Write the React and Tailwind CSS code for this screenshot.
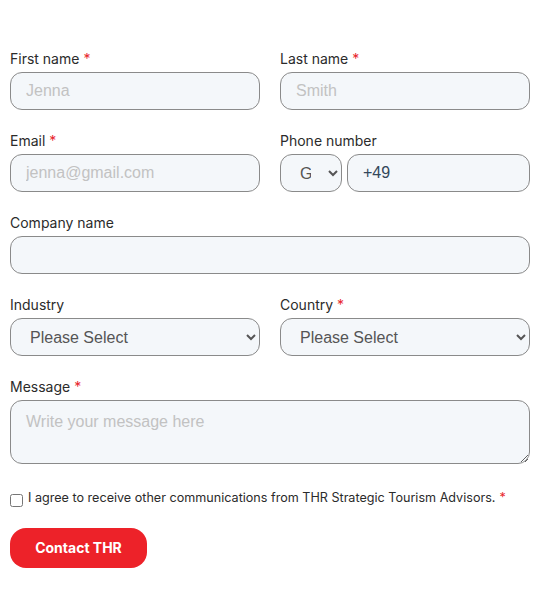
const baseCls =
  'block h-[38px] rounded-[12px] border border-[#8a8a8a] bg-[#f4f7fa] text-[16px] outline-none'
const inputCls =
  baseCls + ' w-full min-w-0 px-[15px] text-[#33475b] placeholder:text-[#c2c2c2]'
const selectCls = baseCls + ' w-full pl-[15px] pr-[4px] text-[#555]'
const codeCls = baseCls + ' w-[62px] shrink-0 pl-[15px] pr-[14px] text-[#555]'

function Label({ children, required }) {
  return (
    <label className="mb-[3px] block font-['Inter',sans-serif] text-[14px] leading-[20px] text-[#2b2b2b]">
      {children}
      {required && <span className="ml-[4px] text-[#e8262b]">*</span>}
    </label>
  )
}

function Field({ label, required, children, wide }) {
  return (
    <div className={wide ? 'col-span-2' : ''}>
      <Label required={required}>{label}</Label>
      {children}
    </div>
  )
}

export default function App() {
  return (
    <div className="min-h-[596px] bg-white px-[10px] pt-[49px] font-['Liberation_Sans',Arial,sans-serif]">
      <form className="grid grid-cols-2 gap-x-[20px] gap-y-[21px]">
        <Field label="First name" required>
          <input className={inputCls} placeholder="Jenna" />
        </Field>
        <Field label="Last name" required>
          <input className={inputCls} placeholder="Smith" />
        </Field>
        <Field label="Email" required>
          <input className={inputCls} placeholder="jenna@gmail.com" />
        </Field>
        <Field label="Phone number">
          <div className="flex gap-[5px]">
            <select className={codeCls} defaultValue="DE">
              <option value="DE">Germany</option>
            </select>
            <input className={inputCls} defaultValue="+49" />
          </div>
        </Field>
        <Field label="Company name" wide>
          <input className={inputCls} />
        </Field>
        <Field label="Industry">
          <select className={selectCls}>
            <option>Please Select</option>
          </select>
        </Field>
        <Field label="Country" required>
          <select className={selectCls}>
            <option>Please Select</option>
          </select>
        </Field>
        <Field label="Message" required wide>
          <textarea
            className="block h-[64px] w-full rounded-[12px] border border-[#8a8a8a] bg-[#f4f7fa] px-[15px] py-[9px] text-[16px] text-[#33475b] placeholder:text-[#c2c2c2] outline-none"
            placeholder="Write your message here"
          />
        </Field>
      </form>

      <div className="mt-[25px] flex items-center gap-[5px] font-['Inter',sans-serif] text-[12.6px] text-[#2b2b2b]">
        <input type="checkbox" className="m-0 h-[13px] w-[13px] translate-y-[2px]" />
        <span>
          I agree to receive other communications from THR Strategic Tourism Advisors.
          <span className="ml-[4px] text-[#e8262b]">*</span>
        </span>
      </div>

      <button
        type="button"
        className="mt-[20px] h-[40px] w-[137px] rounded-[16px] bg-[#ed2229] font-['Inter',sans-serif] text-[14px] font-bold text-white"
      >
        Contact THR
      </button>
    </div>
  )
}
